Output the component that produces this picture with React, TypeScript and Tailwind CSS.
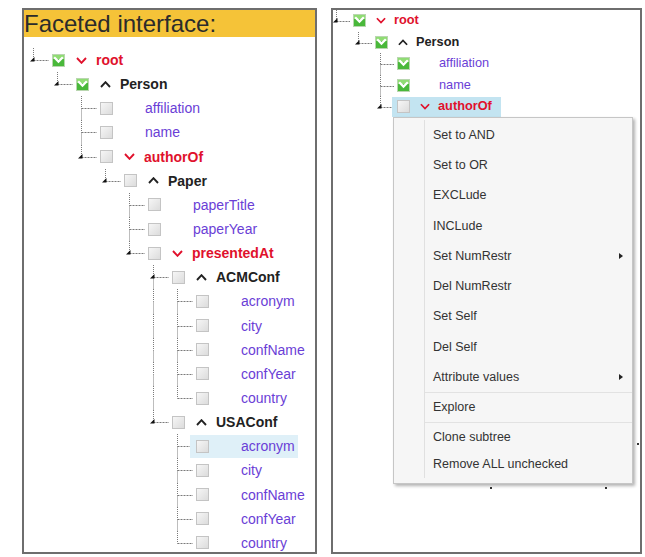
import React from "react"

type Kind = "red" | "black" | "leaf"

interface TreeNode {
  label: string
  kind: Kind
  level: number
  last: boolean
  checked?: boolean
  active?: boolean
}

type Flat = TreeNode & { guides: boolean[] }

// work out which ancestor columns still carry a vertical guide line
const flatten = (nodes: TreeNode[]): Flat[] => {
  const lastAt: boolean[] = []
  return nodes.map(n => {
    lastAt[n.level] = n.last
    const guides: boolean[] = []
    for (let d = 0; d < n.level; d++) guides.push(!lastAt[d])
    return { ...n, guides }
  })
}

const leftTree = flatten([
  { label: "root", kind: "red", level: 0, last: true, checked: true },
  { label: "Person", kind: "black", level: 1, last: true, checked: true },
  { label: "affiliation", kind: "leaf", level: 2, last: false },
  { label: "name", kind: "leaf", level: 2, last: false },
  { label: "authorOf", kind: "red", level: 2, last: true },
  { label: "Paper", kind: "black", level: 3, last: true },
  { label: "paperTitle", kind: "leaf", level: 4, last: false },
  { label: "paperYear", kind: "leaf", level: 4, last: false },
  { label: "presentedAt", kind: "red", level: 4, last: true },
  { label: "ACMConf", kind: "black", level: 5, last: false },
  { label: "acronym", kind: "leaf", level: 6, last: false },
  { label: "city", kind: "leaf", level: 6, last: false },
  { label: "confName", kind: "leaf", level: 6, last: false },
  { label: "confYear", kind: "leaf", level: 6, last: false },
  { label: "country", kind: "leaf", level: 6, last: true },
  { label: "USAConf", kind: "black", level: 5, last: true },
  { label: "acronym", kind: "leaf", level: 6, last: false, active: true },
  { label: "city", kind: "leaf", level: 6, last: false },
  { label: "confName", kind: "leaf", level: 6, last: false },
  { label: "confYear", kind: "leaf", level: 6, last: false },
  { label: "country", kind: "leaf", level: 6, last: true },
])

const rightTree = flatten([
  { label: "root", kind: "red", level: 0, last: true, checked: true },
  { label: "Person", kind: "black", level: 1, last: true, checked: true },
  { label: "affiliation", kind: "leaf", level: 2, last: false, checked: true },
  { label: "name", kind: "leaf", level: 2, last: false, checked: true },
  { label: "authorOf", kind: "red", level: 2, last: true, active: true },
])

const menuItems = [
  { text: "Set to AND", h: "h-[30.25px]" },
  { text: "Set to OR", h: "h-[30.25px]" },
  { text: "EXCLude", h: "h-[30.25px]" },
  { text: "INCLude", h: "h-[30.25px]" },
  { text: "Set NumRestr", h: "h-[30.25px]", sub: true },
  { text: "Del NumRestr", h: "h-[30.25px]" },
  { text: "Set Self", h: "h-[30.25px]" },
  { text: "Del Self", h: "h-[30.25px]" },
  { text: "Attribute values", h: "h-[30.25px]", sub: true },
  { text: "Explore", h: "h-[30px]", sep: true },
  { text: "Clone subtree", h: "h-[29px]", sep: true },
  { text: "Remove ALL unchecked", h: "h-[27px]" },
]

const sizes = {
  lg: {
    row: "h-[24.15px]",
    w: 24,
    h: 24,
    text: "text-[14px]",
    chev: "ml-[11px] mr-[9px]",
    leaf: "ml-[32px]",
    chevW: 11,
    active: "bg-[#dff0f8] -ml-[6px] pl-[6px] pr-[3px] h-[23px]",
  },
  sm: {
    row: "h-[21.5px]",
    w: 22,
    h: 21,
    text: "text-[12.75px]",
    chev: "ml-[10px] mr-[8px]",
    leaf: "ml-[29px]",
    chevW: 10,
    active: "bg-[#c3e4f1] -ml-[5px] pl-[5px] pr-[9px] h-[20px]",
  },
}

const LineCell = ({ w, h, top, bottom, branch, marker }: {
  w: number; h: number; top: boolean; bottom: boolean; branch?: boolean; marker?: boolean
}) => {
  const x = 5.5
  const m = Math.round(h / 2) + 0.5
  return (
    <svg width={w} height={h} className="block shrink-0 overflow-visible">
      {top && <line x1={x} y1={0} x2={x} y2={m} stroke="#7a7a7a" strokeDasharray="1 1" />}
      {bottom && <line x1={x} y1={m} x2={x} y2={h + 1} stroke="#7a7a7a" strokeDasharray="1 1" />}
      {branch && <line x1={x} y1={m} x2={w - 3} y2={m} stroke="#7a7a7a" strokeDasharray="2 1" />}
      {marker && <polygon points={`${x - 3.5},${m + 1} ${x + 1},${m - 3.5} ${x + 1},${m + 1}`} fill="#111" />}
    </svg>
  )
}

const Checkbox = ({ checked }: { checked?: boolean }) =>
  checked ? (
    <svg width="13" height="13" viewBox="0 0 13 13" className="block shrink-0">
      <rect x="0.5" y="0.5" width="12" height="12" fill="#49b83a" stroke="#b9d6b0" />
      <rect x="1" y="1" width="11" height="4" fill="#8fdc73" />
      <path d="M2.2 3.2 L6.5 7.6 L10.8 3.2" stroke="#fff" strokeWidth="2.2" fill="none" />
    </svg>
  ) : (
    <span className="block w-[13px] h-[13px] shrink-0 border border-[#c4c4c4] bg-gradient-to-br from-[#f6f6f6] to-[#dcdcdc]" />
  )

const Chevron = ({ down, w }: { down: boolean; w: number }) => (
  <svg width={w} height="7" viewBox="0 0 11 7" className="block shrink-0">
    <polyline
      points={down ? "1,1 5.5,5.8 10,1" : "1,6 5.5,1.2 10,6"}
      stroke={down ? "#e0112c" : "#222"}
      strokeWidth="1.9"
      fill="none"
    />
  </svg>
)

const TreeRow = ({ node, size }: { node: Flat; size: "lg" | "sm" }) => {
  const s = sizes[size]
  const color =
    node.kind === "red" ? "text-[#e0112c] font-bold" : node.kind === "black" ? "text-[#222] font-bold" : "text-[#6a3ed6]"
  return (
    <div className={`flex items-center ${s.row}`}>
      {node.guides.map((g, i) => (
        <LineCell key={i} w={s.w} h={s.h} top={g} bottom={g} />
      ))}
      <LineCell w={s.w} h={s.h} top bottom={!node.last} branch marker={node.kind !== "leaf"} />
      <div className={`flex items-center ${node.active ? s.active : ""}`}>
        <Checkbox checked={node.checked} />
        {node.kind === "leaf" ? (
          <span className={`${s.leaf} ${s.text} ${color} leading-none`}>{node.label}</span>
        ) : (
          <>
            <span className={s.chev}>
              <Chevron down={node.kind === "red"} w={s.chevW} />
            </span>
            <span className={`${s.text} ${color} leading-none`}>{node.label}</span>
          </>
        )}
      </div>
    </div>
  )
}

export default function App() {
  return (
    <div className="w-[645px] h-[557px] bg-white flex gap-[14px] pt-[8px] pl-[22px] font-['Liberation_Sans',Arial,sans-serif]">
      {/* Faceted interface */}
      <div className="w-[295px] h-[546px] border-2 border-[#6e6e6e] flex flex-col">
        <div className="h-[27px] bg-[#f5c338] text-[24px] leading-[28px] text-[#2b2b2b] whitespace-nowrap">
          Faceted interface:
        </div>
        <div className="pt-[11px] ml-[4px]">
          {leftTree.map((n, i) => (
            <TreeRow key={i} node={n} size="lg" />
          ))}
        </div>
      </div>

      {/* Tree with context menu */}
      <div className="relative w-[311px] h-[546px] border-2 border-[#6e6e6e]">
        <div className="-ml-[2px]">
          {rightTree.map((n, i) => (
            <TreeRow key={i} node={n} size="sm" />
          ))}
        </div>

        <span className="absolute left-[157px] top-[477px] w-[2px] h-[2px] bg-[#333]" />
        <span className="absolute left-[272px] top-[477px] w-[2px] h-[2px] bg-[#333]" />
        <span className="absolute left-[304px] top-[433px] w-[2px] h-[2px] bg-[#333]" />

        <div className="absolute left-[60px] top-[107px] w-[240px] h-[367px] bg-[#f6f6f6] border border-[#c6c6c6] shadow-[2px_2px_3px_rgba(0,0,0,0.3)] pt-[2px] text-[12.5px] text-[#333]">
          {menuItems.map(item => (
            <div key={item.text} className={`flex ${item.h}`}>
              <div className="w-[31px] shrink-0 border-r border-[#e0e0e0]" />
              <div
                className={`flex-1 flex items-center justify-between pl-[8px] pr-[9px] ${
                  item.sep ? "border-t border-[#e2e2e2]" : ""
                }`}
              >
                <span>{item.text}</span>
                {item.sub && (
                  <svg width="4" height="6" viewBox="0 0 4 6">
                    <polygon points="0,0 4,3 0,6" fill="#222" />
                  </svg>
                )}
              </div>
            </div>
          ))}
        </div>
      </div>
    </div>
  )
}
